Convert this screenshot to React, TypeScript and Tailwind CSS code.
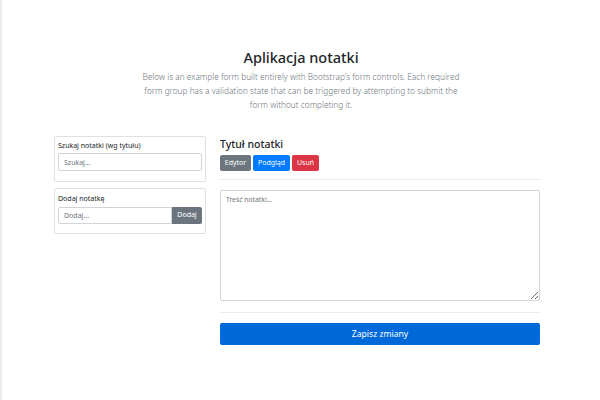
export default function App() {
	return (
		<div
			className="w-[600px] h-[400px] bg-white border-l-2 border-[#ededed] text-[#212529] overflow-hidden"
			style={{ fontFamily: '"Noto Sans", "Open Sans", sans-serif' }}
		>
			<div className="pt-[47px] flex flex-col items-center">
				<h2 className="text-[14.5px] leading-[20px] font-medium">Aplikacja notatki</h2>
				<p className="mt-[3px] w-[330px] text-center text-[8.3px] leading-[14px] font-light text-[#6c757d]">
					Below is an example form built entirely with Bootstrap's form controls. Each required
					form group has a validation state that can be triggered by attempting to submit the
					form without completing it.
				</p>
			</div>
			<div className="mt-[24px] pl-[52px] flex gap-[14px]">
				<div className="w-[152px] flex flex-col gap-[6px]">
					<div className="border border-[#dee2e6] rounded-[2px] px-[3px] pt-[3px] pb-[10px]">
						<label className="block text-[7px] leading-[11px] mb-[2px]">Szukaj notatki (wg tytułu)</label>
						<input
							className="block w-full h-[18px] border border-[#ced4da] rounded-[2px] px-[5px] text-[7px] placeholder-[#6c757d] outline-none"
							placeholder="Szukaj..."
						/>
					</div>
					<div className="border border-[#dee2e6] rounded-[2px] px-[3px] pt-[4px] pb-[9px]">
						<label className="block text-[7px] leading-[11px] mb-[3px]">Dodaj notatkę</label>
						<div className="flex">
							<input
								className="block flex-1 min-w-0 h-[17px] border border-[#ced4da] rounded-l-[2px] px-[5px] text-[7px] placeholder-[#6c757d] outline-none"
								placeholder="Dodaj..."
							/>
							<button className="h-[17px] w-[30px] bg-[#6c757d] text-white text-[7px] rounded-r-[2px]">
								Dodaj
							</button>
						</div>
					</div>
				</div>
				<div className="w-[320px]">
					<h4 className="text-[10.5px] leading-[16px] font-medium">Tytuł notatki</h4>
					<div className="mt-[3px] flex gap-[2px]">
						<button className="h-[16px] w-[31px] bg-[#6c757d] text-white text-[7px] rounded-[2px]">Edytor</button>
						<button className="h-[16px] w-[37px] bg-[#007bff] text-white text-[7px] rounded-[2px]">Podgląd</button>
						<button className="h-[16px] w-[27px] bg-[#dc3545] text-white text-[7px] rounded-[2px]">Usuń</button>
					</div>
					<hr className="mt-[8px] border-t border-[#ececec]" />
					<textarea
						className="mt-[10px] block w-full h-[111px] border border-[#ced4da] rounded-[2px] px-[5px] py-[4px] text-[6.8px] placeholder-[#6c757d] outline-none"
						placeholder="Treść notatki..."
					></textarea>
					<hr className="mt-[11px] border-t border-[#ececec]" />
					<button className="mt-[10px] w-full h-[22px] bg-[#0069d9] text-white text-[8.6px] rounded-[2px]">
						Zapisz zmiany
					</button>
				</div>
			</div>
		</div>
	);
}
